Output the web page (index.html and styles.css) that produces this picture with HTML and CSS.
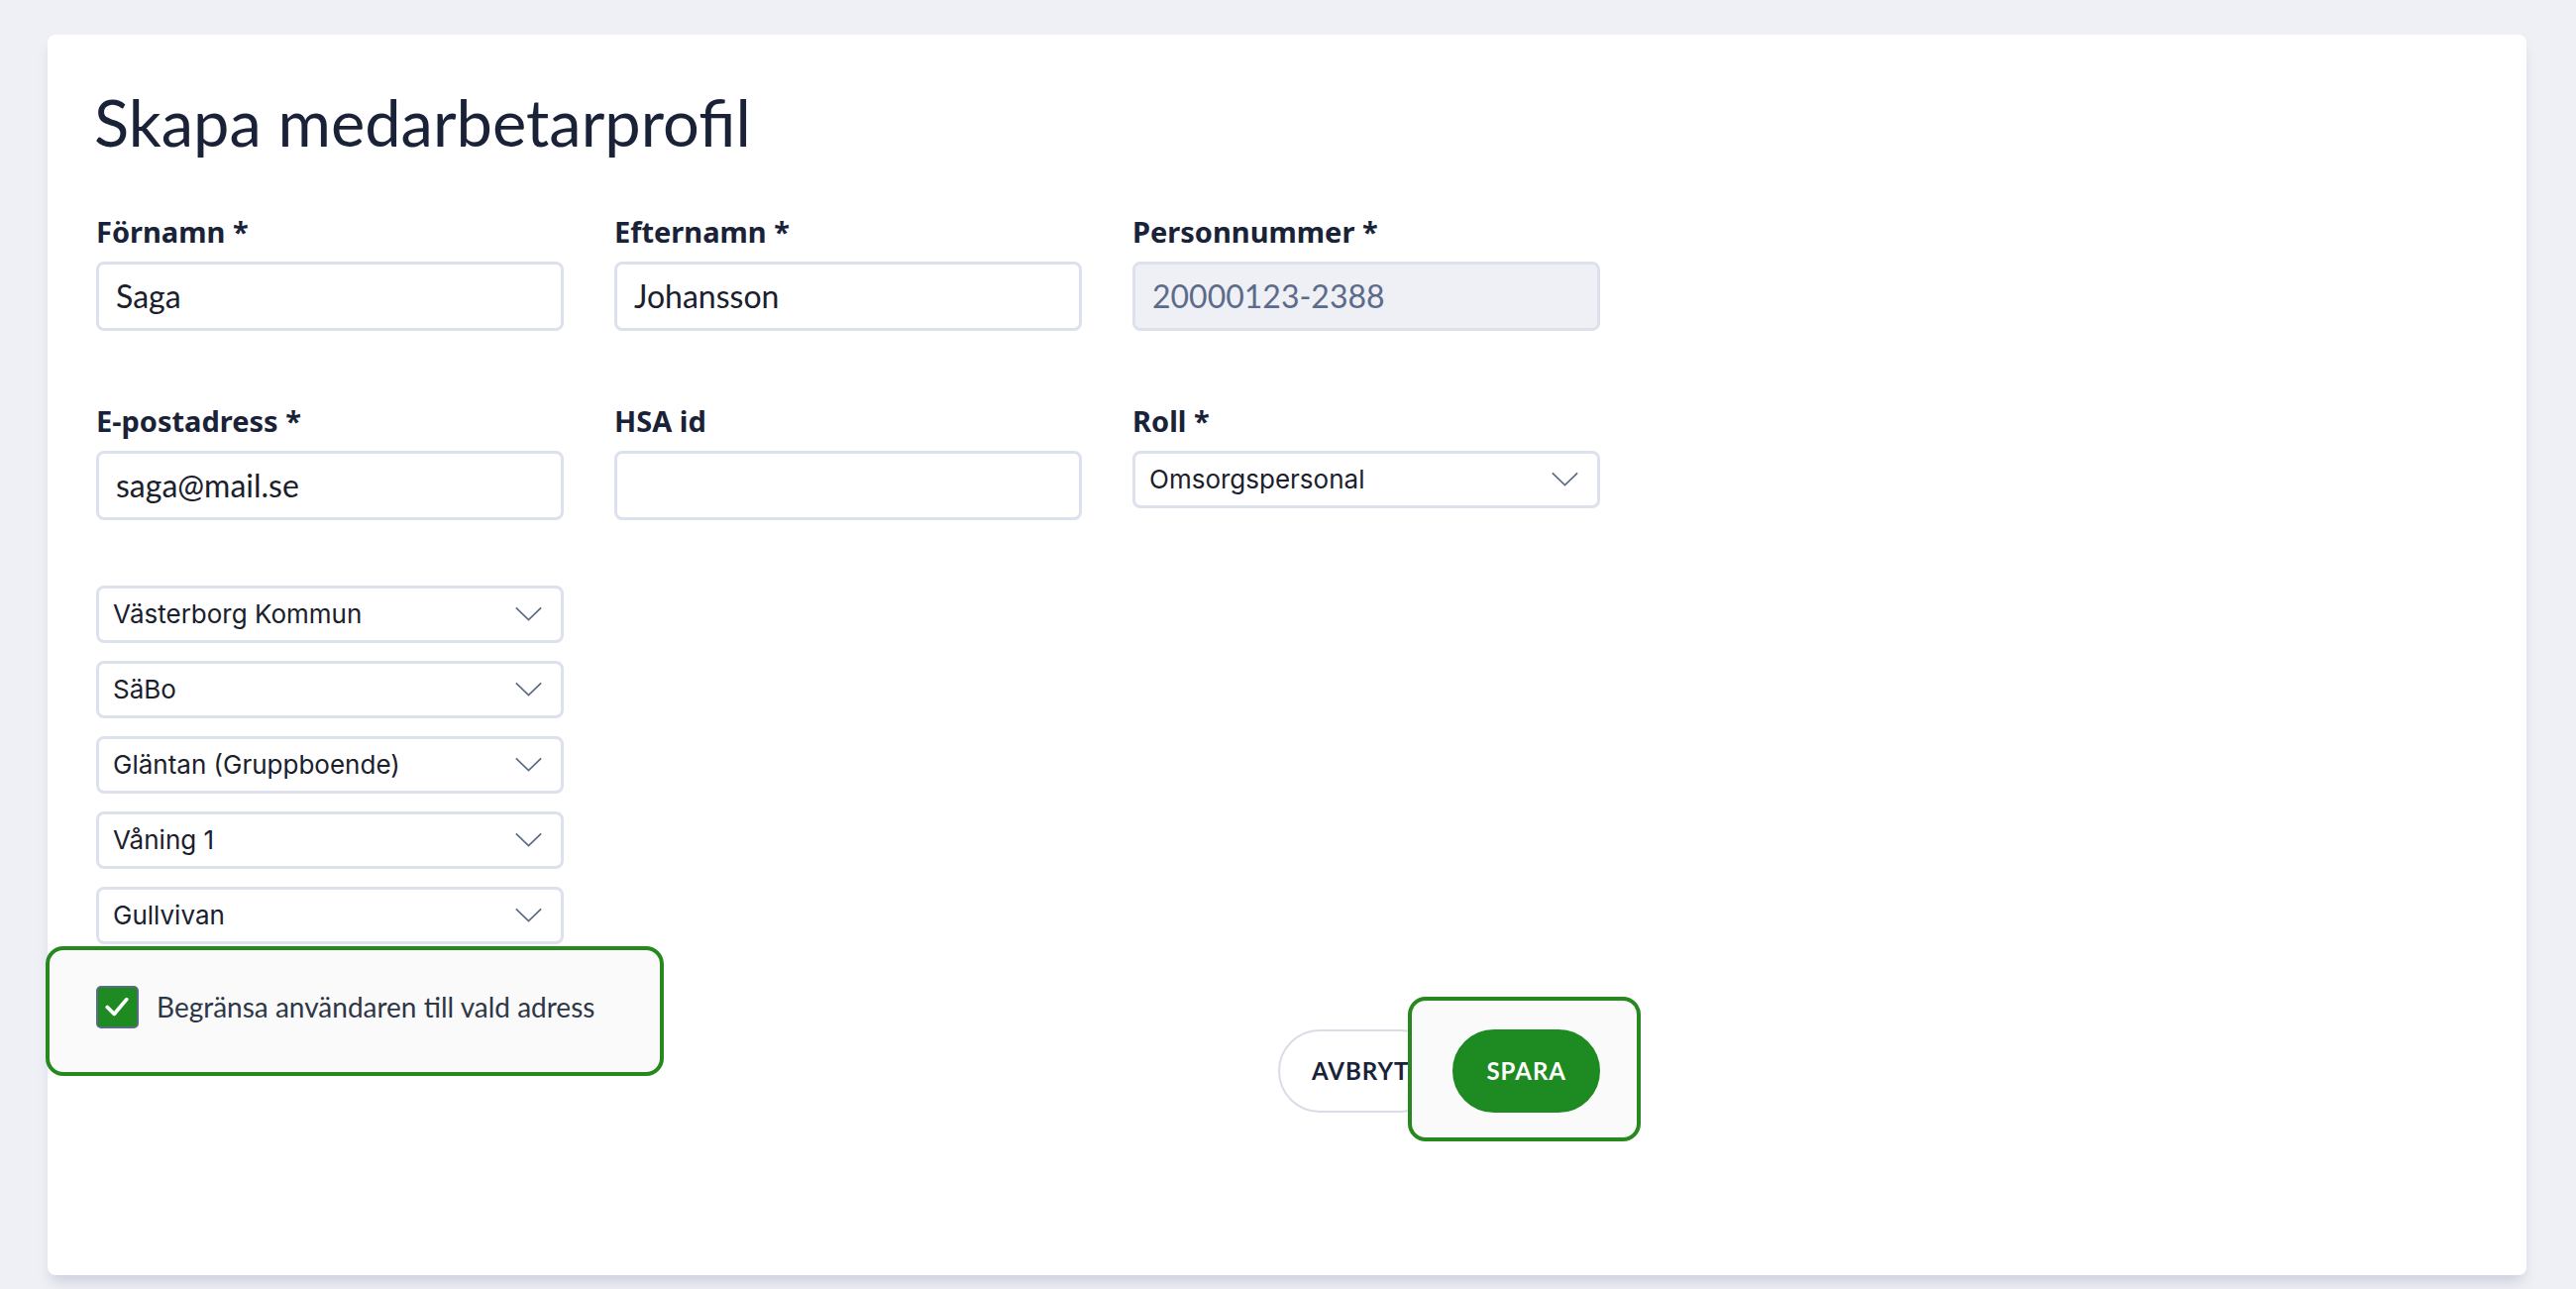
FILE: index.html
```html
<!DOCTYPE html>
<html lang="sv">
<head>
    <meta charset="UTF-8">
    <title>Skapa medarbetarprofil</title>
    <link rel="stylesheet" href="styles.css">
</head>
<body>
    <main class="card">
        <h1 class="title">Skapa medarbetarprofil</h1>

        <form class="profile-form">
            <!-- Personal details -->
            <div class="field-grid">
                <div class="field">
                    <label for="firstName">Förnamn *</label>
                    <input type="text" id="firstName" value="Saga">
                </div>
                <div class="field">
                    <label for="lastName">Efternamn *</label>
                    <input type="text" id="lastName" value="Johansson">
                </div>
                <div class="field">
                    <label for="personalNumber">Personnummer *</label>
                    <input type="text" id="personalNumber" value="20000123-2388" disabled>
                </div>
                <div class="field">
                    <label for="email">E-postadress *</label>
                    <input type="text" id="email" value="saga@mail.se">
                </div>
                <div class="field">
                    <label for="hsaId">HSA id</label>
                    <input type="text" id="hsaId" value="">
                </div>
                <div class="field">
                    <label>Roll *</label>
                    <div class="select">
                        <span>Omsorgspersonal</span>
                        <svg class="chevron" viewBox="0 0 30 16"><polyline points="1.5,1.5 15,14.5 28.5,1.5"/></svg>
                    </div>
                </div>
            </div>

            <!-- Organisation tree -->
            <div class="select-stack">
                <div class="select">
                    <span>Västerborg Kommun</span>
                    <svg class="chevron" viewBox="0 0 30 16"><polyline points="1.5,1.5 15,14.5 28.5,1.5"/></svg>
                </div>
                <div class="select">
                    <span>SäBo</span>
                    <svg class="chevron" viewBox="0 0 30 16"><polyline points="1.5,1.5 15,14.5 28.5,1.5"/></svg>
                </div>
                <div class="select">
                    <span>Gläntan (Gruppboende)</span>
                    <svg class="chevron" viewBox="0 0 30 16"><polyline points="1.5,1.5 15,14.5 28.5,1.5"/></svg>
                </div>
                <div class="select">
                    <span>Våning 1</span>
                    <svg class="chevron" viewBox="0 0 30 16"><polyline points="1.5,1.5 15,14.5 28.5,1.5"/></svg>
                </div>
                <div class="select">
                    <span>Gullvivan</span>
                    <svg class="chevron" viewBox="0 0 30 16"><polyline points="1.5,1.5 15,14.5 28.5,1.5"/></svg>
                </div>
            </div>

            <label class="check-row highlight">
                <span class="checkbox">
                    <svg viewBox="0 0 42 42"><polyline points="10,21 17.5,28.5 31,12.5"/></svg>
                </span>
                <span>Begränsa användaren till vald adress</span>
            </label>

            <div class="actions">
                <button type="button" class="btn btn-cancel">AVBRYT</button>
                <span class="highlight highlight-save">
                    <button type="button" class="btn btn-save">SPARA</button>
                </span>
            </div>
        </form>
    </main>
</body>
</html>
```

FILE: styles.css
```css
body {
    margin: 0;
    padding: 35px 50px 14px 48px;
    background-color: #eff0f5;
    font-family: Lato, "Noto Sans", sans-serif;
    color: #1a2238;
}

.card {
    box-sizing: border-box;
    min-height: 1252px;
    padding: 49px 49px 40px;
    background-color: white;
    border-radius: 8px;
    box-shadow: 0 10px 14px -4px rgba(90, 105, 150, 0.25);
}

.title {
    margin: 0 0 55px -2px;
    font-size: 65px;
    font-weight: 400;
    line-height: 1.2;
    color: #1a2238;
}

.profile-form {
    width: 1518px;
}

.field-grid {
    display: grid;
    grid-template-columns: repeat(3, 472px);
    column-gap: 51px;
    row-gap: 74px;
}

.field {
    display: flex;
    flex-direction: column;
    gap: 12px;
}

.field label {
    font-family: "Noto Sans", Lato, sans-serif;
    font-size: 29px;
    font-weight: 700;
    line-height: 1.2;
    color: #1a2238;
}

input {
    box-sizing: border-box;
    height: 70px;
    padding: 0 17px;
    border: 3px solid #dde1ed;
    border-radius: 8px;
    background-color: white;
    font-family: inherit;
    font-size: 32px;
    color: #1a202c;
    outline: none;
}

input:disabled {
    background-color: #eef0f6;
    color: #5d6b8a;
}

.select {
    box-sizing: border-box;
    display: flex;
    align-items: center;
    justify-content: space-between;
    height: 58px;
    padding: 0 18px 0 14px;
    border: 3px solid #dde1ed;
    border-radius: 8px;
    background-color: white;
    font-family: Inter, "Noto Sans", sans-serif;
    font-size: 26px;
    color: #1a202c;
}

.chevron {
    width: 29px;
    height: 15px;
    fill: none;
    stroke: #5b6a86;
    stroke-width: 1.8;
}

.select-stack {
    display: flex;
    flex-direction: column;
    gap: 18px;
    width: 472px;
    margin-top: 66px;
}

/* tour highlight boxes drawn behind the highlighted element */
.highlight {
    position: relative;
    z-index: 1;
}

.highlight::before {
    content: "";
    position: absolute;
    z-index: -1;
    border: 4px solid #27881d;
    border-radius: 18px;
    background-color: #fafafa;
}

.check-row {
    display: inline-flex;
    align-items: center;
    gap: 18px;
    margin-top: 42px;
    font-size: 28px;
    color: #2d3748;
}

.check-row::before {
    left: -51px;
    top: -40px;
    width: 624px;
    height: 131px;
    box-sizing: border-box;
}

.checkbox {
    box-sizing: border-box;
    display: flex;
    width: 43px;
    height: 43px;
    border: 2px solid #5b6a86;
    border-radius: 5px;
    background-color: #1e8a22;
}

.checkbox svg {
    width: 100%;
    height: 100%;
    fill: none;
    stroke: white;
    stroke-width: 4;
    stroke-linecap: round;
    stroke-linejoin: round;
}

.actions {
    display: flex;
    justify-content: flex-end;
    gap: 10px;
}

.highlight-save {
    display: flex;
}

.highlight-save::before {
    left: -45px;
    top: -33px;
    right: -41px;
    bottom: -29px;
}

.btn {
    box-sizing: border-box;
    height: 84px;
    padding: 0 32px;
    border-radius: 42px;
    font-family: Lato, "Noto Sans", sans-serif;
    font-size: 24px;
    font-weight: 700;
    letter-spacing: 1px;
    cursor: pointer;
}

.btn-cancel {
    border: 2px solid #d9dde9;
    background-color: white;
    color: #1a2238;
}

.btn-save {
    border: 2px solid #1e8a22;
    background-color: #1e8a22;
    color: white;
}
```
